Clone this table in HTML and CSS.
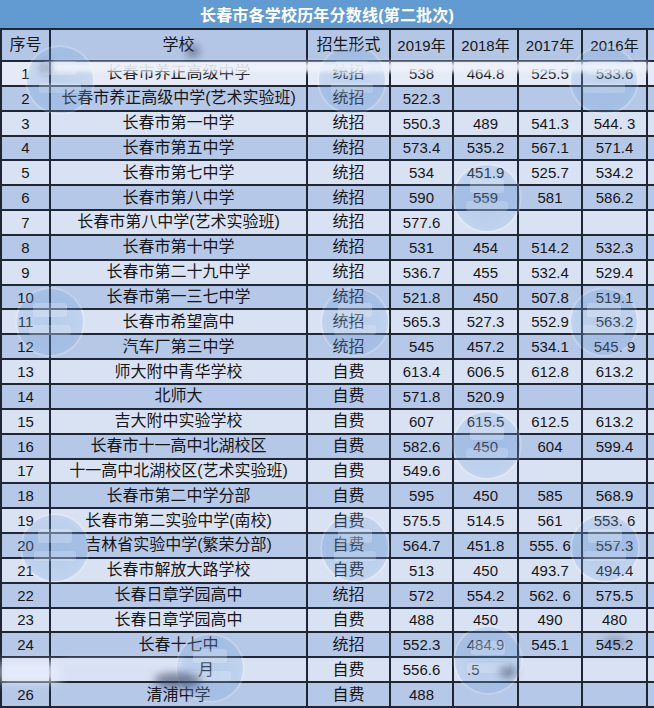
FILE: index.html
```html
<!DOCTYPE html>
<html lang="zh-CN">
<head>
<meta charset="utf-8">
<title>长春市各学校历年分数线(第二批次)</title>
<link rel="stylesheet" href="styles.css">
</head>
<body>
<div class="sheet">
  <div class="title">长春市各学校历年分数线(第二批次)</div>
  <div class="table">
    <div class="row head">
      <div class="c">序号</div><div class="c">学校</div><div class="c">招生形式</div><div class="c n">2019年</div><div class="c n">2018年</div><div class="c n">2017年</div><div class="c n">2016年</div><div class="c"></div>
    </div>
    <div class="row first">
      <div class="c n">1</div><div class="c">长春市养正高级中学</div><div class="c">统招</div><div class="c n">538</div><div class="c n">464.8</div><div class="c n">525.5</div><div class="c n">533.6</div><div class="c"></div>
    </div>
    <div class="row even">
      <div class="c n">2</div><div class="c">长春市养正高级中学(艺术实验班)</div><div class="c">统招</div><div class="c n">522.3</div><div class="c n"></div><div class="c n"></div><div class="c n"></div><div class="c"></div>
    </div>
    <div class="row odd">
      <div class="c n">3</div><div class="c">长春市第一中学</div><div class="c">统招</div><div class="c n">550.3</div><div class="c n">489</div><div class="c n">541.3</div><div class="c n">544. 3</div><div class="c"></div>
    </div>
    <div class="row even">
      <div class="c n">4</div><div class="c">长春市第五中学</div><div class="c">统招</div><div class="c n">573.4</div><div class="c n">535.2</div><div class="c n">567.1</div><div class="c n">571.4</div><div class="c"></div>
    </div>
    <div class="row odd">
      <div class="c n">5</div><div class="c">长春市第七中学</div><div class="c">统招</div><div class="c n">534</div><div class="c n">451.9</div><div class="c n">525.7</div><div class="c n">534.2</div><div class="c"></div>
    </div>
    <div class="row even">
      <div class="c n">6</div><div class="c">长春市第八中学</div><div class="c">统招</div><div class="c n">590</div><div class="c n">559</div><div class="c n">581</div><div class="c n">586.2</div><div class="c"></div>
    </div>
    <div class="row odd">
      <div class="c n">7</div><div class="c">长春市第八中学(艺术实验班)</div><div class="c">统招</div><div class="c n">577.6</div><div class="c n"></div><div class="c n"></div><div class="c n"></div><div class="c"></div>
    </div>
    <div class="row even">
      <div class="c n">8</div><div class="c">长春市第十中学</div><div class="c">统招</div><div class="c n">531</div><div class="c n">454</div><div class="c n">514.2</div><div class="c n">532.3</div><div class="c"></div>
    </div>
    <div class="row odd">
      <div class="c n">9</div><div class="c">长春市第二十九中学</div><div class="c">统招</div><div class="c n">536.7</div><div class="c n">455</div><div class="c n">532.4</div><div class="c n">529.4</div><div class="c"></div>
    </div>
    <div class="row even">
      <div class="c n">10</div><div class="c">长春市第一三七中学</div><div class="c">统招</div><div class="c n">521.8</div><div class="c n">450</div><div class="c n">507.8</div><div class="c n">519.1</div><div class="c"></div>
    </div>
    <div class="row odd">
      <div class="c n">11</div><div class="c">长春市希望高中</div><div class="c">统招</div><div class="c n">565.3</div><div class="c n">527.3</div><div class="c n">552.9</div><div class="c n">563.2</div><div class="c"></div>
    </div>
    <div class="row even">
      <div class="c n">12</div><div class="c">汽车厂第三中学</div><div class="c">统招</div><div class="c n">545</div><div class="c n">457.2</div><div class="c n">534.1</div><div class="c n">545. 9</div><div class="c"></div>
    </div>
    <div class="row odd">
      <div class="c n">13</div><div class="c">师大附中青华学校</div><div class="c">自费</div><div class="c n">613.4</div><div class="c n">606.5</div><div class="c n">612.8</div><div class="c n">613.2</div><div class="c"></div>
    </div>
    <div class="row even">
      <div class="c n">14</div><div class="c">北师大</div><div class="c">自费</div><div class="c n">571.8</div><div class="c n">520.9</div><div class="c n"></div><div class="c n"></div><div class="c"></div>
    </div>
    <div class="row odd">
      <div class="c n">15</div><div class="c">吉大附中实验学校</div><div class="c">自费</div><div class="c n">607</div><div class="c n">615.5</div><div class="c n">612.5</div><div class="c n">613.2</div><div class="c"></div>
    </div>
    <div class="row even">
      <div class="c n">16</div><div class="c">长春市十一高中北湖校区</div><div class="c">自费</div><div class="c n">582.6</div><div class="c n">450</div><div class="c n">604</div><div class="c n">599.4</div><div class="c"></div>
    </div>
    <div class="row odd">
      <div class="c n">17</div><div class="c">十一高中北湖校区(艺术实验班)</div><div class="c">自费</div><div class="c n">549.6</div><div class="c n"></div><div class="c n"></div><div class="c n"></div><div class="c"></div>
    </div>
    <div class="row even">
      <div class="c n">18</div><div class="c">长春市第二中学分部</div><div class="c">自费</div><div class="c n">595</div><div class="c n">450</div><div class="c n">585</div><div class="c n">568.9</div><div class="c"></div>
    </div>
    <div class="row odd">
      <div class="c n">19</div><div class="c">长春市第二实验中学(南校)</div><div class="c">自费</div><div class="c n">575.5</div><div class="c n">514.5</div><div class="c n">561</div><div class="c n">553. 6</div><div class="c"></div>
    </div>
    <div class="row even">
      <div class="c n">20</div><div class="c">吉林省实验中学(繁荣分部)</div><div class="c">自费</div><div class="c n">564.7</div><div class="c n">451.8</div><div class="c n">555. 6</div><div class="c n">557.3</div><div class="c"></div>
    </div>
    <div class="row odd">
      <div class="c n">21</div><div class="c">长春市解放大路学校</div><div class="c">自费</div><div class="c n">513</div><div class="c n">450</div><div class="c n">493.7</div><div class="c n">494.4</div><div class="c"></div>
    </div>
    <div class="row even">
      <div class="c n">22</div><div class="c">长春日章学园高中</div><div class="c">统招</div><div class="c n">572</div><div class="c n">554.2</div><div class="c n">562. 6</div><div class="c n">575.5</div><div class="c"></div>
    </div>
    <div class="row odd">
      <div class="c n">23</div><div class="c">长春日章学园高中</div><div class="c">自费</div><div class="c n">488</div><div class="c n">450</div><div class="c n">490</div><div class="c n">480</div><div class="c"></div>
    </div>
    <div class="row even">
      <div class="c n">24</div><div class="c">长春十七中</div><div class="c">统招</div><div class="c n">552.3</div><div class="c n">484.9</div><div class="c n">545.1</div><div class="c n">545.2</div><div class="c"></div>
    </div>
    <div class="row odd blurred">
      <div class="c n"></div><div class="c lone">月</div><div class="c">自费</div><div class="c n">556.6</div><div class="c n part">.5</div><div class="c n"></div><div class="c n"></div><div class="c"></div>
    </div>
    <div class="row even">
      <div class="c n">26</div><div class="c">清浦中学</div><div class="c">自费</div><div class="c n">488</div><div class="c n"></div><div class="c n"></div><div class="c n"></div><div class="c"></div>
    </div>
  </div>

  <div class="wm w1"></div>
  <div class="wm w2"></div>
  <div class="wm w3"></div>
  <div class="wm w4"></div>
  <div class="wm w5"></div>
  <div class="wm w6"></div>
  <div class="wm w7"></div>
  <div class="wm w8"></div>
  <div class="wm w9"></div>
  <div class="wm w10"></div>
  <div class="wm w11"></div>
  <div class="wm w12"></div>
  <div class="wm w13"></div>

  <div class="veil v-row1"></div>
  <div class="smudge s1"></div>
  <div class="smudge s2"></div>
  <div class="smudge s3"></div>
  <div class="smudge s4"></div>
  <div class="smudge s5"></div>
  <div class="veil v-row25a"></div>
  <div class="veil v-row25b"></div>
</div>
</body>
</html>
```

FILE: styles.css
```css
html, body {
  margin: 0;
  padding: 0;
}
body {
  width: 654px;
  height: 708px;
  overflow: hidden;
  background: #1f2735;
  font-family: "Liberation Sans", "Noto Sans CJK SC", sans-serif;
  color: #161616;
}
.sheet {
  position: relative;
  width: 654px;
  height: 708px;
  overflow: hidden;
}
.title {
  height: 28px;
  background: #629bd2;
  color: #ffffff;
  font-size: 16px;
  font-weight: 700;
  display: flex;
  align-items: center;
  justify-content: center;
  letter-spacing: 0.2px;
}
.table {
  display: flex;
  flex-direction: column;
  gap: 2px;
  padding-top: 2px;
  background: #1f2735;
}
.row {
  display: grid;
  grid-template-columns: 47px 255px 81px 61px 63px 62px 63px 6px;
  column-gap: 2px;
  padding-left: 2px;
  height: 22.85px;
}
.row.head {
  height: 30px;
}
.c {
  display: flex;
  align-items: center;
  justify-content: center;
  font-size: 16px;
  line-height: 1;
  white-space: nowrap;
  overflow: hidden;
}
.c.n {
  font-size: 15px;
}
.head .c { background: #b3c6e6; }
.first .c { background: #e4eaf6; }
.odd .c { background: #d9e2f3; }
.even .c { background: #b6c8e8; }
.head .c:first-child { font-size: 16px; }
.c.lone {
  justify-content: flex-start;
  padding-left: 147px;
}
.c.part {
  justify-content: flex-start;
  padding-left: 13px;
}

/* watermarks */
.wm {
  position: absolute;
  width: 66px;
  height: 66px;
  margin: -33px 0 0 -33px;
  border-radius: 50%;
  background: radial-gradient(circle, rgba(120, 165, 220, 0.34) 0%, rgba(120, 165, 220, 0.28) 60%, rgba(120, 165, 220, 0.12) 100%);
  box-shadow: 0 0 0 2px rgba(255, 255, 255, 0.18);
  pointer-events: none;
}
.wm::before {
  content: "";
  position: absolute;
  left: 16px;
  top: 14px;
  width: 34px;
  height: 14px;
  border-radius: 3px;
  background: rgba(255, 255, 255, 0.22);
}
.wm::after {
  content: "";
  position: absolute;
  left: 12px;
  top: 36px;
  width: 42px;
  height: 10px;
  border-radius: 3px;
  background: rgba(255, 255, 255, 0.18);
}
.w1 { left: 60px; top: 80px; }
.w2 { left: 352px; top: 80px; }
.w3 { left: 604px; top: 80px; }
.w4 { left: 487px; top: 198px; }
.w5 { left: 50px; top: 322px; }
.w6 { left: 355px; top: 322px; }
.w7 { left: 604px; top: 322px; }
.w8 { left: 487px; top: 445px; }
.w9 { left: 55px; top: 548px; }
.w10 { left: 355px; top: 548px; }
.w11 { left: 605px; top: 548px; }
.w12 { left: 210px; top: 668px; }
.w13 { left: 488px; top: 660px; }

/* blurred patches of the screenshot */
.veil {
  position: absolute;
  background: rgba(238, 242, 251, 0.92);
  filter: blur(2px);
  pointer-events: none;
}
.v-row1 { left: 52px; top: 62px; width: 596px; height: 10px; }
.v-row25a { left: 0; top: 662px; width: 60px; height: 20px; background: rgba(230, 236, 250, 0.85); filter: blur(5px); }
.v-row25b { left: 62px; top: 660px; width: 120px; height: 6px; background: rgba(220, 228, 246, 0.9); filter: blur(3px); }
.smudge {
  position: absolute;
  border-radius: 40%;
  background: rgba(55, 65, 95, 0.6);
  filter: blur(4px);
  pointer-events: none;
}
.s1 { left: 187px; top: 46px; width: 12px; height: 11px; }
.s2 { left: 42px; top: 62px; width: 8px; height: 12px; background: rgba(55, 65, 95, 0.45); }
.s3 { left: 155px; top: 673px; width: 45px; height: 15px; }
.s4 { left: 500px; top: 667px; width: 16px; height: 10px; }
.s5 { left: 604px; top: 638px; width: 22px; height: 8px; background: rgba(55, 65, 95, 0.4); }
```
